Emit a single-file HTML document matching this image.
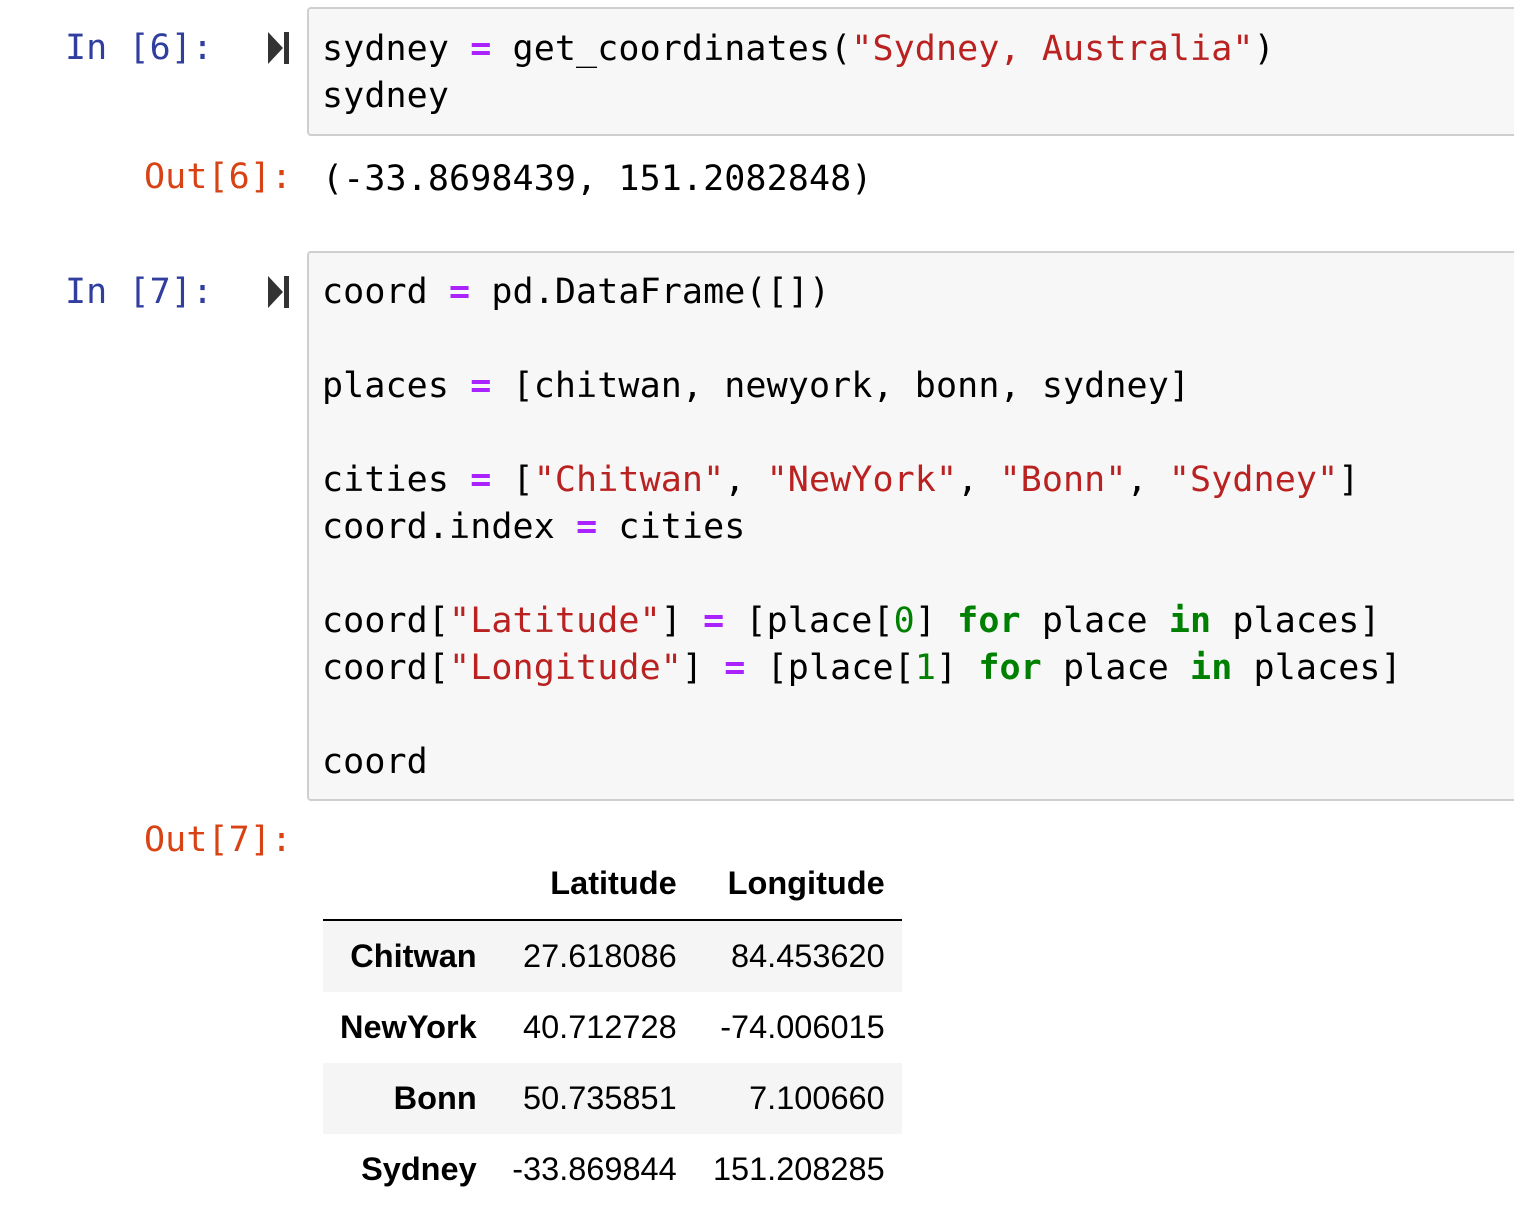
<!DOCTYPE html>
<html><head><meta charset="utf-8"><style>
html,body{margin:0;padding:0;background:#fff;width:1514px;height:1210px;overflow:hidden;position:relative}
.m{font-family:"DejaVu Sans Mono","Liberation Mono",monospace;font-size:35px;line-height:47px;white-space:pre;position:absolute;color:#000;letter-spacing:0.1px}
.pin{color:#303f9f}.pout{color:#d84315}
.box{position:absolute;left:307px;right:-10px;background:#f7f7f7;border:2px solid #cfcfcf;border-radius:4px}
.o{color:#aa22ff;font-weight:bold}.s{color:#ba2121}.k{color:#008000;font-weight:bold}.n{color:#008000}
.run{position:absolute;left:267px;width:24px;height:36px}
table{position:absolute;left:323px;top:847px;border-collapse:collapse;font-family:"Liberation Sans",Arial,sans-serif;font-size:32.5px;color:#000}
td,th{text-align:right;padding:0 17px 0 17px;height:71px}
th{font-weight:bold}
thead th{height:72px;border-bottom:2px solid #000;vertical-align:middle}
tbody tr:nth-child(odd){background:#f5f5f5}
</style></head><body>
<div class="m pin" style="left:65px;top:25px">In [6]:</div>
<svg class="run" style="top:30px" viewBox="0 0 24 36"><path d="M1 2 L16 18 L1 34Z" fill="#333"/><rect x="17" y="2" width="5" height="32" fill="#333"/></svg>
<div class="box" style="top:7px;height:125px"></div>
<div class="m" style="left:322px;top:26px">sydney <span class="o">=</span> get_coordinates(<span class="s">"Sydney, Australia"</span>)
sydney</div>
<div class="m pout" style="left:144px;top:154px">Out[6]:</div>
<div class="m" style="left:322px;top:156px">(-33.8698439, 151.2082848)</div>

<div class="m pin" style="left:65px;top:269px">In [7]:</div>
<svg class="run" style="top:274px" viewBox="0 0 24 36"><path d="M1 2 L16 18 L1 34Z" fill="#333"/><rect x="17" y="2" width="5" height="32" fill="#333"/></svg>
<div class="box" style="top:251px;height:546px"></div>
<div class="m" style="left:322px;top:269px">coord <span class="o">=</span> pd.DataFrame([])

places <span class="o">=</span> [chitwan, newyork, bonn, sydney]

cities <span class="o">=</span> [<span class="s">"Chitwan"</span>, <span class="s">"NewYork"</span>, <span class="s">"Bonn"</span>, <span class="s">"Sydney"</span>]
coord.index <span class="o">=</span> cities

coord[<span class="s">"Latitude"</span>] <span class="o">=</span> [place[<span class="n">0</span>] <span class="k">for</span> place <span class="k">in</span> places]
coord[<span class="s">"Longitude"</span>] <span class="o">=</span> [place[<span class="n">1</span>] <span class="k">for</span> place <span class="k">in</span> places]

coord</div>
<div class="m pout" style="left:144px;top:817px">Out[7]:</div>
<table>
<thead><tr><th style="width:120px"></th><th style="width:166px">Latitude</th><th style="width:174px">Longitude</th></tr></thead>
<tbody>
<tr><th>Chitwan</th><td>27.618086</td><td>84.453620</td></tr>
<tr><th>NewYork</th><td>40.712728</td><td>-74.006015</td></tr>
<tr><th>Bonn</th><td>50.735851</td><td>7.100660</td></tr>
<tr><th>Sydney</th><td>-33.869844</td><td>151.208285</td></tr>
</tbody></table>
</body></html>
